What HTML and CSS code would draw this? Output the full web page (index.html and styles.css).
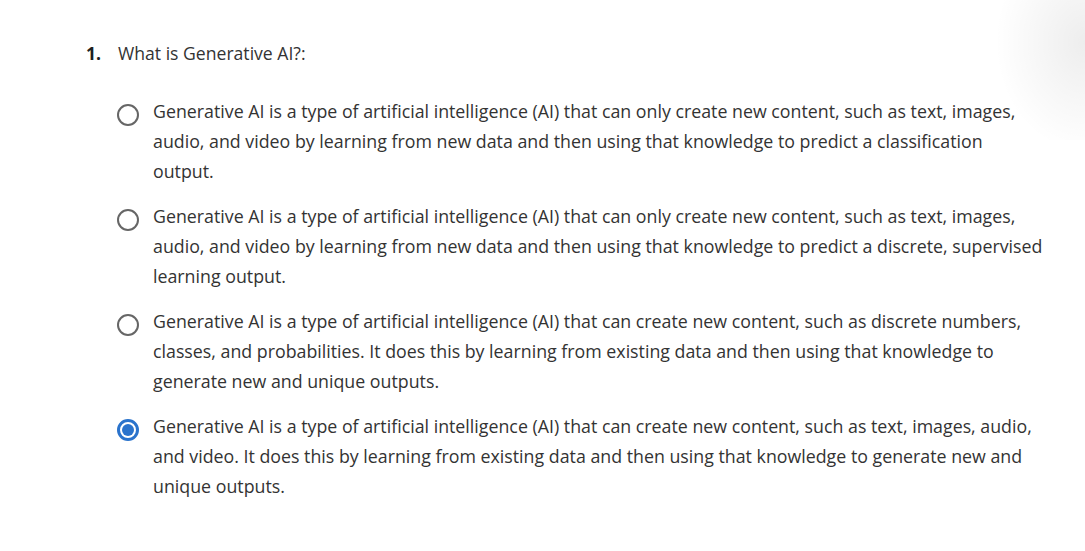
FILE: index.html
```html
<!DOCTYPE html>
<html lang="en">
<head>
<meta charset="utf-8">
<title>Quiz</title>
<link rel="stylesheet" href="styles.css">
</head>
<body>
<div class="corner-shadow"></div>
<main class="quiz">
  <div class="question">
    <span class="q-num">1.</span>
    <span class="q-text">What is Generative AI?:</span>
  </div>
  <div class="options">
    <label class="option">
      <span class="radio"></span>
      <span class="opt-text">Generative AI is a type of artificial intelligence (AI) that can only create new content, such as text, images, audio, and video by learning from new data and then using that knowledge to predict a classification output.</span>
    </label>
    <label class="option">
      <span class="radio"></span>
      <span class="opt-text">Generative AI is a type of artificial intelligence (AI) that can only create new content, such as text, images, audio, and video by learning from new data and then using that knowledge to predict a discrete, supervised learning output.</span>
    </label>
    <label class="option">
      <span class="radio"></span>
      <span class="opt-text">Generative AI is a type of artificial intelligence (AI) that can create new content, such as discrete numbers, classes, and probabilities. It does this by learning from existing data and then using that knowledge to generate new and unique outputs.</span>
    </label>
    <label class="option selected">
      <span class="radio"></span>
      <span class="opt-text">Generative AI is a type of artificial intelligence (AI) that can create new content, such as text, images, audio, and video. It does this by learning from existing data and then using that knowledge to generate new and unique outputs.</span>
    </label>
  </div>
</main>
</body>
</html>
```
FILE: styles.css
```css
html, body {
  margin: 0;
  padding: 0;
  background: #ffffff;
}
body {
  font-family: "Open Sans", "Noto Sans", sans-serif;
  color: #373a3c;
  width: 1085px;
  height: 551px;
  overflow: hidden;
  position: relative;
}
.corner-shadow {
  position: absolute;
  top: 0;
  right: 0;
  width: 110px;
  height: 140px;
  background: radial-gradient(ellipse 90px 110px at 100% 30%, rgba(0,0,0,0.07), rgba(0,0,0,0) 100%);
  pointer-events: none;
}
.quiz {
  padding: 40px 0 0 86px;
  width: 970px;
}
.question {
  display: flex;
  align-items: baseline;
  font-size: 17.6px;
  line-height: 26px;
}
.q-num {
  font-weight: 700;
  width: 32px;
  color: #1f1f1f;
}
.q-text {
  color: #333;
}
.options {
  display: flex;
  flex-direction: column;
  gap: 19px;
  margin-top: 34px;
  padding-left: 31px;
}
.option {
  display: flex;
  align-items: flex-start;
  gap: 14px;
}
.radio {
  flex: none;
  width: 18px;
  height: 18px;
  border: 2px solid #666;
  border-radius: 50%;
  margin-top: 4px;
  box-sizing: content-box;
  position: relative;
}
.selected .radio {
  border: 3px solid #2a73cc;
  width: 16px;
  height: 16px;
}
.selected .radio::after {
  content: "";
  position: absolute;
  left: 2px;
  top: 2px;
  width: 12px;
  height: 12px;
  border-radius: 50%;
  background: #2a73cc;
}
.opt-text {
  font-size: 17.8px;
  line-height: 30px;
  color: #333;
  width: 891px;
  margin-top: -4px;
}
```
